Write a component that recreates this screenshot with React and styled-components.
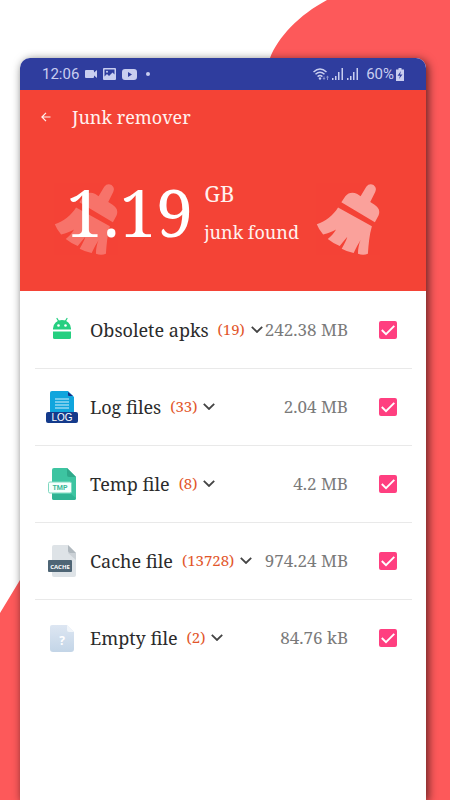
import React, { useState } from 'react';
import styled, { createGlobalStyle, ThemeProvider } from 'styled-components';

const theme = {
  colors: {
    page: '#ffffff',
    blob: '#fd595a',
    status: '#2f3d9e',
    statusText: '#c9cef0',
    header: '#f44336',
    text: '#2b2b2b',
    muted: '#7a7a7a',
    count: '#e2562a',
    accent: '#ff3f80',
    divider: '#e9e9e9',
  },
  fonts: {
    serif: '"Noto Serif", "Droid Serif", "DejaVu Serif", serif',
    sans: 'Roboto, "Liberation Sans", sans-serif',
  },
};

const GlobalStyle = createGlobalStyle`
  *, *::before, *::after { box-sizing: border-box; }
  html, body, #root { height: 100%; margin: 0; }
  body { background: #ffffff; }
`;

const Page = styled.div`
  position: relative;
  min-height: 100%;
  display: flex;
  padding: 58px 24px 0 20px;
  overflow: hidden;
  background: ${({ theme }) => theme.colors.page};
  font-family: ${({ theme }) => theme.fonts.serif};
`;

const Backdrop = styled.svg`
  position: absolute;
  inset: 0;
  width: 100%;
  height: 100%;
  fill: ${({ theme }) => theme.colors.blob};
`;

const Phone = styled.main`
  position: relative;
  flex: 1;
  min-width: 0;
  overflow: hidden;
  border-radius: 10px 10px 0 0;
  background: ${({ theme }) => theme.colors.page};
`;

const PhoneShadow = styled.div`
  position: relative;
  flex: 1;
  min-width: 0;
  display: flex;
  border-radius: 10px 10px 0 0;
  box-shadow: 2px 2px 10px 0 rgba(0, 0, 0, 0.65);
`;

const StatusBar = styled.div`
  display: flex;
  align-items: center;
  height: 32px;
  padding: 0 22px;
  background: ${({ theme }) => theme.colors.status};
  color: ${({ theme }) => theme.colors.statusText};
  font-family: ${({ theme }) => theme.fonts.sans};
  font-size: 15px;
  line-height: 20px;
`;

const StatusGroup = styled.div`
  display: flex;
  align-items: center;
  gap: ${({ $gap }) => $gap}px;
  margin-left: ${({ $end }) => ($end ? 'auto' : '0')};
  svg { display: block; fill: currentColor; }
`;

const Header = styled.header`
  height: 201px;
  background: ${({ theme }) => theme.colors.header};
  color: #fff1ee;
`;

const TitleBar = styled.div`
  display: flex;
  align-items: center;
  gap: 16px;
  height: 54px;
  padding: 0 15px;
`;

const BackButton = styled.button`
  display: flex;
  align-items: center;
  justify-content: center;
  width: 21px;
  height: 24px;
  padding: 0;
  border: 0;
  background: none;
  color: inherit;
  cursor: pointer;
`;

const Title = styled.h1`
  margin: 0;
  font-size: 18px;
  line-height: 24px;
  font-weight: 400;
`;

const Summary = styled.div`
  position: relative;
  display: flex;
  align-items: flex-start;
  gap: 11px;
  padding: 39px 45px 0 46px;
`;

const Brush = styled.svg`
  position: relative;
  flex: none;
  width: 66px;
  height: 73px;
  margin-left: auto;
  fill: #ffffff;
  opacity: 0.5;
`;

const BackBrush = styled(Brush)`
  position: absolute;
  left: 33px;
  opacity: 0.26;
`;

const Total = styled.div`
  position: relative;
  font-size: 66px;
  line-height: 56px;
  color: #ffffff;
`;

const TotalInfo = styled.div`
  display: flex;
  flex-direction: column;
  gap: 18px;
`;

const Unit = styled.div`
  font-size: 22px;
  line-height: 20px;
`;

const Caption = styled.div`
  font-size: 18px;
  line-height: 22px;
  white-space: nowrap;
`;

const List = styled.ul`
  margin: 0;
  padding: 1px 14px 0 15px;
  list-style: none;
`;

const Row = styled.li`
  display: flex;
  align-items: center;
  height: 77px;
  padding: 0 15px 0 11px;
  border-bottom: 1px solid ${({ theme }) => theme.colors.divider};

  &:last-child { border-bottom-color: transparent; }
`;

const RowIcon = styled.svg`
  flex: none;
  width: 32px;
  height: 36px;
  margin-right: 12px;
`;

const RowLabel = styled.label`
  font-size: 18px;
  line-height: 24px;
  white-space: nowrap;
  color: ${({ theme }) => theme.colors.text};
`;

const Expand = styled.button`
  display: flex;
  align-items: center;
  gap: 6px;
  margin-left: 9px;
  padding: 0 0 2px;
  border: 0;
  background: none;
  font-family: inherit;
  font-size: 15px;
  line-height: 20px;
  color: ${({ theme }) => theme.colors.count};
  cursor: pointer;
`;

const Amount = styled.span`
  margin-left: auto;
  font-size: 17px;
  line-height: 24px;
  white-space: nowrap;
  color: ${({ theme }) => theme.colors.muted};
`;

const CheckBox = styled.span`
  position: relative;
  flex: none;
  width: 18px;
  height: 18px;
  margin-left: 31px;
  svg {
    position: absolute;
    inset: 0;
    pointer-events: none;
  }
`;

const CheckInput = styled.input`
  display: block;
  appearance: none;
  width: 18px;
  height: 18px;
  margin: 0;
  border: 2px solid ${({ theme }) => theme.colors.accent};
  border-radius: 2px;
  background: #ffffff;
  cursor: pointer;
  &:checked { background: ${({ theme }) => theme.colors.accent}; }
`;

const BRUSH_HANDLE = 'M424 126 L436 108 Q450 92 472 101 L482 108 L499 79 Q508 68 521 74 Q532 82 526 95 L511 125 L523 133 Q544 146 536 166 L525 186 Z';
const BRUSH_HEAD = 'M414 142 L516 198 C508 226 506 252 504 281 Q490 288 474 281 C474 266 477 252 482 240 C475 252 468 264 461 279 Q441 275 425 266 C432 254 438 243 442 230 C434 240 426 249 419 258 Q399 250 383 237 C394 228 402 218 408 208 C397 214 385 219 369 223 Q356 208 350 192 C377 184 399 166 414 142 Z';

const BrushShape = () => (
  <>
    <path d={BRUSH_HANDLE} />
    <path d={BRUSH_HEAD} />
  </>
);

const ApkIcon = () => (
  <RowIcon viewBox="0 0 32 36" aria-hidden="true">
    <g fill="#25cf80">
      <path d="M7 17.500 V16.500 a9 8.500 0 0 1 18 0 V17.500 z" />
      <path d="M7 19.500 H25 V25.500 Q25 27 23.500 27 H8.500 Q7 27 7 25.500 Z" />
    </g>
    <path d="M11 6.500 L12.500 9 M21 6.500 L19.500 9" stroke="#25cf80" strokeWidth="1.300" strokeLinecap="round" />
    <circle cx="12.500" cy="13.500" r="1.300" fill="#fff" />
    <circle cx="19.500" cy="13.500" r="1.300" fill="#fff" />
  </RowIcon>
);

const LogIcon = () => (
  <RowIcon viewBox="0 0 32 36" aria-hidden="true">
    <path d="M6 2 H22 L28 8 V24 H4 V4 Q4 2 6 2 Z" fill="#10a5dd" />
    <path d="M22 3 L27 7 H23 Q22 7 22 6 Z" fill="#1a2f86" />
    <path d="M9 10 H23 M9 13 H23 M9 16 H23 M9 19 H23" stroke="#d5f0fb" strokeWidth="1" />
    <rect x="0" y="23" width="32" height="11" rx="2" fill="#143a8b" />
    <text x="16" y="32" textAnchor="middle" fontFamily="Liberation Sans, sans-serif" fontSize="10" fill="#fff">LOG</text>
  </RowIcon>
);

const TmpIcon = () => (
  <RowIcon viewBox="0 0 32 36" aria-hidden="true">
    <path d="M8 2 H21 L30 11 V32 Q30 34 28 34 H8 Q6 34 6 32 V4 Q6 2 8 2 Z" fill="#3dc4a1" />
    <path d="M21 2 L30 11 H23 Q21 11 21 9 Z" fill="#2fa98a" />
    <path d="M6 28 H25 L30 32 Q30 34 28 34 H8 Q6 34 6 32 Z" fill="#2fb393" />
    <rect x="2.500" y="16" width="23" height="11" rx="1.500" fill="#f5fffc" stroke="#7fd8c0" />
    <text x="14" y="24" textAnchor="middle" fontFamily="Roboto, sans-serif" fontWeight="700" fontSize="7" fill="#3bb797">TMP</text>
  </RowIcon>
);

const CacheIcon = () => (
  <RowIcon viewBox="0 0 32 36" aria-hidden="true">
    <path d="M8 2 H22 L30 10 V32 Q30 34 28 34 H8 Q6 34 6 32 V4 Q6 2 8 2 Z" fill="#dee3e7" />
    <path d="M22 10 H30 V17 Z" fill="#cbd1d6" />
    <path d="M22 2 L30 10 H24 Q22 10 22 8 Z" fill="#b0b8be" />
    <rect x="2" y="17" width="24" height="12" rx="1" fill="#4e6575" />
    <text x="14" y="25.500" textAnchor="middle" fontFamily="Open Sans, sans-serif" fontWeight="700" fontSize="6" fill="#fff">CACHE</text>
  </RowIcon>
);

const EmptyIcon = () => (
  <RowIcon viewBox="0 0 32 36" aria-hidden="true">
    <defs>
      <linearGradient id="emptyFill" x1="0" y1="0" x2="0" y2="1">
        <stop offset="0" stopColor="#dde6f2" />
        <stop offset="1" stopColor="#c3d5e7" />
      </linearGradient>
    </defs>
    <path d="M6 5 H21 L28 12 V29 Q28 32 25 32 H7 Q4 32 4 29 V7 Q4 5 6 5 Z" fill="url(#emptyFill)" />
    <path d="M21 5 L28 12 H23 Q21 12 21 10 Z" fill="#f1f5fa" />
    <text x="16" y="25" textAnchor="middle" fontFamily="Open Sans, sans-serif" fontWeight="700" fontSize="12" fill="#fff">?</text>
  </RowIcon>
);

const Signal = () => (
  <svg width="12" height="12" viewBox="0 0 12 12" aria-hidden="true">
    <path d="M0 10h1.500v2H0zM3 8h1.500v4H3zM6 4h1.500v8H6zM9.500 0H11v12H9.500z" />
  </svg>
);

const ITEMS = [
  { id: 'apks', label: 'Obsolete apks', count: 19, size: '242.38 MB', Icon: ApkIcon },
  { id: 'log', label: 'Log files', count: 33, size: '2.04 MB', Icon: LogIcon },
  { id: 'temp', label: 'Temp file', count: 8, size: '4.2 MB', Icon: TmpIcon },
  { id: 'cache', label: 'Cache file', count: 13728, size: '974.24 MB', Icon: CacheIcon },
  { id: 'empty', label: 'Empty file', count: 2, size: '84.76 kB', Icon: EmptyIcon },
];

const JunkRow = ({ item }) => {
  const [checked, setChecked] = useState(true);
  const { Icon } = item;

  return (
    <Row>
      <Icon />
      <RowLabel htmlFor={item.id}>{item.label}</RowLabel>
      <Expand type="button">
        ({item.count})
        <svg width="12" height="8" viewBox="0 0 12 8" fill="none" stroke="#444" strokeWidth="1.800" aria-hidden="true">
          <path d="M0.800 1.800 L6 7 L11.200 1.800" />
        </svg>
      </Expand>
      <Amount>{item.size}</Amount>
      <CheckBox>
        <CheckInput id={item.id} type="checkbox" checked={checked} onChange={() => setChecked(!checked)} />
        {checked && (
          <svg width="18" height="18" viewBox="0 0 18 18" fill="none" stroke="#fff" strokeWidth="1.900" aria-hidden="true">
            <path d="M2.800 9 L7 13.200 L15.300 4.800" />
          </svg>
        )}
      </CheckBox>
    </Row>
  );
};

const App = () => (
  <ThemeProvider theme={theme}>
    <GlobalStyle />
    <Page>
      <Backdrop viewBox="0 0 450 800" preserveAspectRatio="none" aria-hidden="true">
        <path d="M327 0 C299 15 278 37 270 58 C230 200 150 380 20 580 L0 613 V800 H450 V0 Z" />
      </Backdrop>
      <PhoneShadow>
        <Phone>
          <StatusBar>
            <StatusGroup $gap={6}>
              <span>12:06</span>
              <svg width="12" height="10" viewBox="0 0 12 10" aria-hidden="true">
                <path d="M1 1h7q1 0 1 1v1.500L12 1v8L9 6.500V8q0 1-1 1H1Q0 9 0 8V2q0-1 1-1z" />
              </svg>
              <svg width="13" height="12" viewBox="0 0 13 12" aria-hidden="true">
                <path fillRule="evenodd" d="M1 0h11q1 0 1 1v10q0 1-1 1H1q-1 0-1-1V1q0-1 1-1zm.500 1.500v7L4 6l2 2 3.500-3.500 2 2v-5z" />
                <circle cx="4" cy="3.700" r="1" />
              </svg>
              <svg width="15" height="11" viewBox="0 0 15 11" aria-hidden="true">
                <path fillRule="evenodd" d="M3 0h9q3 0 3 3v5q0 3-3 3H3Q0 11 0 8V3q0-3 3-3zm3 3v5l4-2.500z" />
              </svg>
              <svg width="12" height="4" viewBox="0 0 12 4" aria-hidden="true">
                <circle cx="5" cy="2" r="2" />
              </svg>
            </StatusGroup>
            <StatusGroup $gap={3} $end>
              <svg width="16" height="13" viewBox="0 0 16 13" aria-hidden="true">
                <g fill="none" stroke="currentColor" strokeWidth="1.500">
                  <path d="M0.500 4 Q7 -2 13.500 4" />
                  <path d="M2.500 6.300 Q7 2.300 11.500 6.300" />
                  <path d="M4.600 8.600 Q7 6.400 9.400 8.600" />
                </g>
                <circle cx="7" cy="10.500" r="1.200" />
                <path d="M9.500 10h1V8.500h1V10h1L11 12zM13 9.500L14.500 7.500 16 9.500h-1V12h-1V9.500z" opacity="0.6" />
              </svg>
              <Signal />
              <Signal />
              <StatusGroup $gap={2}>
                <svg width="2" height="12" aria-hidden="true" />
                <span>60%</span>
                <svg width="8" height="13" viewBox="0 0 8 13" aria-hidden="true">
                  <path fillRule="evenodd" d="M2.500 0h3v1.500H8V13H0V1.500h2.500zM5 3L1.500 7.800H4L3 11l3.500-4.600H4z" />
                </svg>
              </StatusGroup>
            </StatusGroup>
          </StatusBar>
          <Header>
            <TitleBar>
              <BackButton type="button" aria-label="Back">
                <svg width="10" height="10" viewBox="0 0 10 10" fill="none" stroke="currentColor" strokeWidth="1.200" aria-hidden="true">
                  <path d="M9.500 5 H1 M5 0.800 L0.900 5 L5 9.200" />
                </svg>
              </BackButton>
              <Title>Junk remover</Title>
            </TitleBar>
            <Summary>
              <BackBrush viewBox="345 68 198 220" aria-hidden="true"><BrushShape /></BackBrush>
              <Total>1.19</Total>
              <TotalInfo>
                <Unit>GB</Unit>
                <Caption>junk found</Caption>
              </TotalInfo>
              <Brush viewBox="345 68 198 220" aria-hidden="true"><BrushShape /></Brush>
            </Summary>
          </Header>
          <List>
            {ITEMS.map((item) => (
              <JunkRow key={item.id} item={item} />
            ))}
          </List>
        </Phone>
      </PhoneShadow>
    </Page>
  </ThemeProvider>
);

export default App;
